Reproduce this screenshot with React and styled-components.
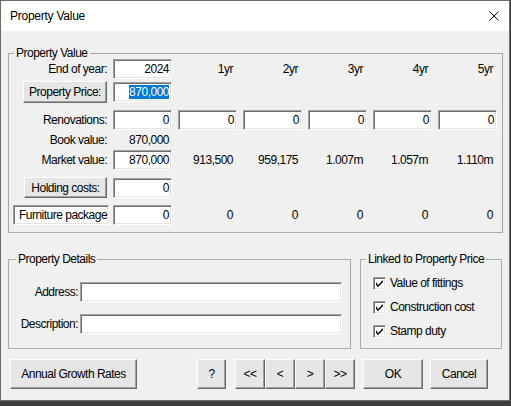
import React from 'react';
import styled, { createGlobalStyle } from 'styled-components';

const GlobalStyle = createGlobalStyle`
  html, body { margin: 0; padding: 0; background: #3d3d3d; }
  body {
    font-family: "Liberation Sans", Arial, sans-serif;
    font-size: 12px;
    letter-spacing: -0.5px;
    color: #000;
  }
  * { box-sizing: border-box; }
`;

const Window = styled.div`
  width: 510px;
  height: 401px;
  border: 1px solid #6b6b6b;
  background: #f0f0f0;
  display: flex;
  flex-direction: column;
`;

const TitleBar = styled.div`
  flex: none;
  height: 30px;
  background: #fff;
  display: flex;
  align-items: center;
  justify-content: space-between;
  padding: 0 10px 0 9px;
`;

const Title = styled.div`
  font-size: 12px;
  letter-spacing: -0.25px;
  line-height: 14px;
`;

const Body = styled.div`
  flex: 1;
  padding: 16px 6px 0 7px;
  display: flex;
  flex-direction: column;
`;

const Group = styled.fieldset`
  margin: 0;
  padding: 0;
  min-width: 0;
  border: 1px solid #a9a9a9;
  width: ${p => (p.$w ? `${p.$w}px` : 'auto')};
`;

const Legend = styled.legend`
  padding: 0 2px;
  margin-left: ${p => p.$ml ?? 5}px;
  height: 12px;
  line-height: 12px;
`;

const GroupInner = styled.div`
  padding: ${p => p.$pad};
`;

const Row = styled.div`
  display: grid;
  grid-template-columns: 94px repeat(6, 59px);
  column-gap: 6px;
  align-items: center;
  height: ${p => p.$h ?? 20}px;
  margin-top: ${p => p.$mt ?? 0}px;
`;

const Label = styled.div`
  text-align: right;
  white-space: nowrap;
  line-height: 14px;
`;

const Value = styled.div`
  text-align: right;
  padding-right: ${p => p.$pr ?? 4}px;
  white-space: nowrap;
  line-height: 14px;
`;

const Field = styled.div`
  height: 20px;
  background: #fff;
  border: 1px solid;
  border-color: #a0a0a0 #fff #fff #a0a0a0;
  box-shadow: inset 1px 1px 0 #6f6f6f, inset -1px -1px 0 #e3e3e3;
  display: flex;
  align-items: center;
  justify-content: flex-end;
  padding-right: 2px;
  line-height: 14px;
  white-space: nowrap;
`;

const Selected = styled.span`
  background: #0078d7;
  color: #fff;
  line-height: 14px;
`;

const Button = styled.button`
  font: inherit;
  letter-spacing: inherit;
  color: #000;
  background: #e6e6e6;
  border: 1px solid;
  border-color: #fff #696969 #696969 #fff;
  box-shadow: inset -1px -1px 0 #a0a0a0, inset 1px 1px 0 #e3e3e3;
  padding: 0;
  margin: 0 0 0 ${p => p.$ml ?? 0}px;
  width: ${p => p.$w}px;
  height: ${p => p.$h ?? 30}px;
  justify-self: ${p => p.$justify ?? 'auto'};
  white-space: nowrap;
  cursor: default;
`;

const SunkenLabel = styled.div`
  width: 96px;
  height: 20px;
  background: #fff;
  border: 1px solid;
  border-color: #a0a0a0 #fff #fff #a0a0a0;
  box-shadow: inset 1px 1px 0 #6f6f6f, inset -1px -1px 0 #e3e3e3;
  display: flex;
  align-items: center;
  justify-content: center;
  padding-left: 4px;
  white-space: nowrap;
  line-height: 14px;
`;

const Lower = styled.div`
  display: flex;
  gap: 9px;
  margin-top: 20px;
`;

const DetailsGrid = styled.div`
  display: grid;
  grid-template-columns: 69px 262px;
  grid-auto-rows: 20px;
  column-gap: 2px;
  row-gap: 12px;
  align-items: center;
`;

const CheckRow = styled.label`
  display: flex;
  align-items: center;
  gap: 4px;
  height: 24px;
`;

const Box = styled.span`
  width: 13px;
  height: 13px;
  background: #fff;
  border: 1px solid;
  border-color: #a0a0a0 #fff #fff #a0a0a0;
  box-shadow: inset 1px 1px 0 #696969, inset -1px -1px 0 #e3e3e3;
  display: flex;
  align-items: center;
  justify-content: center;
  flex: none;
`;

const BottomBar = styled.div`
  display: flex;
  align-items: center;
  margin-top: 10px;
  padding: 0 15px 0 2px;
`;

const Spacer = styled.div`
  flex: 1;
`;

const NavGroup = styled.div`
  display: flex;
  margin-left: ${p => p.$ml}px;
`;

const CloseIcon = () => (
  <svg width="10" height="10" viewBox="0 0 10 10">
    <path d="M0.5 0.5 L9.5 9.5 M9.5 0.5 L0.5 9.5" stroke="#000" strokeWidth="1" fill="none" />
  </svg>
);

const Check = ({ label }) => (
  <CheckRow>
    <Box>
      <svg width="7" height="7" viewBox="0 0 7 7">
        <path d="M0 2 L0 5 L2 7 L7 2 L7 0 L2 5 Z" fill="#000" />
      </svg>
    </Box>
    {label}
  </CheckRow>
);

const years = ['1yr', '2yr', '3yr', '4yr', '5yr'];
const market = ['913,500', '959,175', '1.007m', '1.057m', '1.110m'];

export default function App() {
  return (
    <>
      <GlobalStyle />
      <Window>
        <TitleBar>
          <Title>Property Value</Title>
          <CloseIcon />
        </TitleBar>
        <Body>
          <Group>
            <Legend>Property Value</Legend>
            <GroupInner $pad="0 5px 7px 4px">
              <Row>
                <Label>End of year:</Label>
                <Field>2024</Field>
                {years.map(y => <Value key={y}>{y}</Value>)}
              </Row>
              <Row $h={22} $mt={2}>
                <Button $w={84} $h={22} $justify="end">Property Price:</Button>
                <Field><Selected>870,000</Selected></Field>
              </Row>
              <Row $mt={7}>
                <Label>Renovations:</Label>
                {[0, 1, 2, 3, 4, 5].map(i => <Field key={i}>0</Field>)}
              </Row>
              <Row>
                <Label>Book value:</Label>
                <Value $pr={3}>870,000</Value>
              </Row>
              <Row>
                <Label>Market value:</Label>
                <Field>870,000</Field>
                {market.map(m => <Value key={m}>{m}</Value>)}
              </Row>
              <Row $h={21} $mt={7}>
                <Button $w={83} $h={21} $justify="end">Holding costs:</Button>
                <Field>0</Field>
              </Row>
              <Row $mt={7}>
                <SunkenLabel>Furniture package</SunkenLabel>
                <Field>0</Field>
                {years.map(y => <Value key={y}>0</Value>)}
              </Row>
            </GroupInner>
          </Group>

          <Lower>
            <Group $w={343}>
              <Legend $ml={7}>Property Details</Legend>
              <GroupInner $pad="17px 0 14px 0">
                <DetailsGrid>
                  <Label>Address:</Label>
                  <Field />
                  <Label>Description:</Label>
                  <Field />
                </DetailsGrid>
              </GroupInner>
            </Group>
            <Group $w={142}>
              <Legend>Linked to Property Price</Legend>
              <GroupInner $pad="6px 0 5px 12px">
                <Check label="Value of fittings" />
                <Check label="Construction cost" />
                <Check label="Stamp duty" />
              </GroupInner>
            </Group>
          </Lower>

          <BottomBar>
            <Button $w={127}>Annual Growth Rates</Button>
            <Spacer />
            <Button $w={29}>?</Button>
            <NavGroup $ml={9}>
              <Button $w={30}>&lt;&lt;</Button>
              <Button $w={30}>&lt;</Button>
              <Button $w={30}>&gt;</Button>
              <Button $w={30}>&gt;&gt;</Button>
            </NavGroup>
            <Button $w={60} $ml={8}>OK</Button>
            <Button $w={58} $ml={7}>Cancel</Button>
          </BottomBar>
        </Body>
      </Window>
    </>
  );
}
